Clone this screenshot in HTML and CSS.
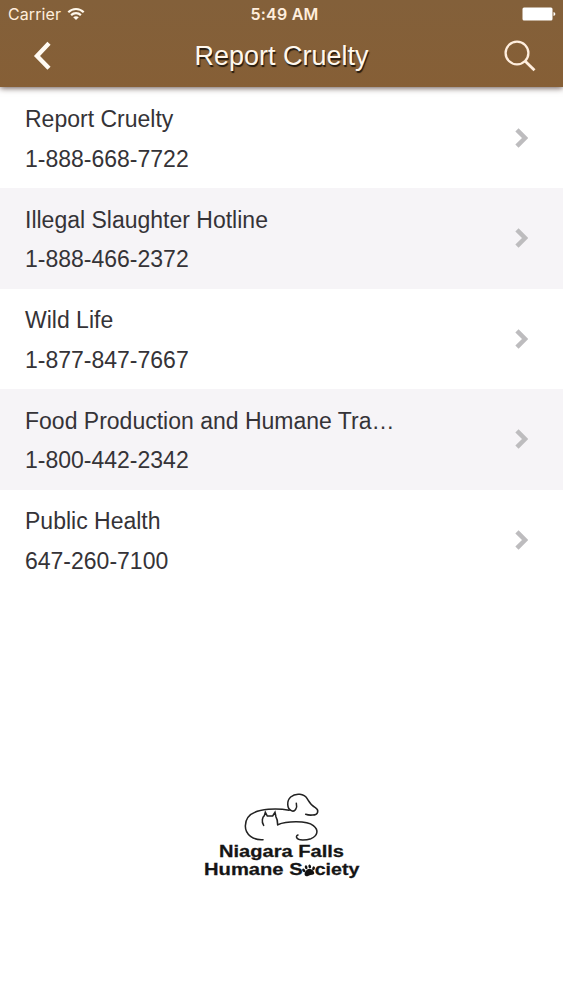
FILE: index.html
```
<!DOCTYPE html>
<html lang="en">
<head>
    <meta charset="utf-8">
    <title>Report Cruelty</title>
    <link rel="stylesheet" href="styles.css">
</head>
<body>
    <header class="header">
        <div class="status-bar">
            <div class="carrier">
                <span>Carrier</span>
                <svg class="wifi" width="18" height="14" viewBox="0 0 18 14" fill="none" stroke="#fff8ec" stroke-width="2.2">
                    <path d="M1.3 5.2C5.6 .9 12.4 .9 16.7 5.2"/>
                    <path d="M4.1 8.1C6.9 5.4 11.1 5.4 13.9 8.1"/>
                    <path d="M9 13L6.2 10.3C7.9 8.8 10.1 8.8 11.8 10.3Z" fill="#fff8ec" stroke="none"/>
                </svg>
            </div>
            <div class="time">5:49 AM</div>
            <svg class="battery" width="34" height="14" viewBox="0 0 34 14" fill="#fff">
                <rect x="0.5" y="0.5" width="30" height="13" rx="1.5"/>
                <path d="M31.5 5Q33.4 5.4 33.4 7T31.5 9Z"/>
            </svg>
        </div>
        <div class="nav-bar">
            <svg class="back" width="20" height="30" viewBox="0 0 20 30" fill="none" stroke="#fffaf2" stroke-width="4.4">
                <path d="M16 2.3L4 15L16 27.3"/>
            </svg>
            <h1>Report Cruelty</h1>
            <svg class="search" width="34" height="34" viewBox="0 0 34 34" fill="none" stroke="#ffeede" stroke-width="2.3">
                <circle cx="14" cy="14" r="11.4"/>
                <path d="M22 22L31.5 31.3" stroke-width="2.8"/>
            </svg>
        </div>
    </header>

    <ul class="list">
        <li class="item">
            <div class="info">
                <div class="name">Report Cruelty</div>
                <div class="phone">1-888-668-7722</div>
            </div>
            <svg class="arrow" viewBox="0 0 14 22"><path d="M2 2L11 11L2 20"/></svg>
        </li>
        <li class="item">
            <div class="info">
                <div class="name">Illegal Slaughter Hotline</div>
                <div class="phone">1-888-466-2372</div>
            </div>
            <svg class="arrow" viewBox="0 0 14 22"><path d="M2 2L11 11L2 20"/></svg>
        </li>
        <li class="item">
            <div class="info">
                <div class="name">Wild Life</div>
                <div class="phone">1-877-847-7667</div>
            </div>
            <svg class="arrow" viewBox="0 0 14 22"><path d="M2 2L11 11L2 20"/></svg>
        </li>
        <li class="item">
            <div class="info">
                <div class="name">Food Production and Humane Tra…</div>
                <div class="phone">1-800-442-2342</div>
            </div>
            <svg class="arrow" viewBox="0 0 14 22"><path d="M2 2L11 11L2 20"/></svg>
        </li>
        <li class="item">
            <div class="info">
                <div class="name">Public Health</div>
                <div class="phone">647-260-7100</div>
            </div>
            <svg class="arrow" viewBox="0 0 14 22"><path d="M2 2L11 11L2 20"/></svg>
        </li>
    </ul>

    <footer class="footer">
        <svg class="logo" width="180" height="110" viewBox="0 0 540 330">
            <g fill="none" stroke="#222" stroke-width="4.6" stroke-linecap="round">
                <!-- dog -->
                <path d="M219 179C190 181 166 164 166 138C166 105 195 91 235 88C262 86 282 88 297 91"/>
                <path d="M319 70C323 85 314 97 304 92C291 86 289 63 302 51C318 37 343 42 351 55C360 70 362 76 376 83C388 90 385 105 368 105C360 106 353 105 347 103"/>
                <!-- cat -->
                <path d="M221 136C213 124 218 111 223 107L226 97L232 108H248L255 97L258 111C262 117 263 124 263 134"/>
                <path d="M263 134C290 123 350 121 370 137C388 151 382 168 363 176C348 181 325 183 320 173C318 168 321 166 324 165"/>
            </g>
            <g class="logo-text">
                <text x="87" y="230" textLength="375" lengthAdjust="spacingAndGlyphs">Niagara Falls</text>
                <text x="42" y="286" textLength="296" lengthAdjust="spacingAndGlyphs">Humane S</text>
                <text x="374" y="286" textLength="134" lengthAdjust="spacingAndGlyphs">ciety</text>
            </g>
            <!-- paw -->
            <g fill="#111" transform="rotate(-12 357 273)">
                <path d="M357 267C365 267 373 276 371 283C369 289 362 285 357 286C351 287 344 289 342 283C341 276 349 267 357 267Z"/>
                <ellipse cx="342" cy="268" rx="4" ry="6" transform="rotate(-30 342 268)"/>
                <ellipse cx="351" cy="260" rx="4" ry="6"/>
                <ellipse cx="362" cy="260" rx="4" ry="6"/>
                <ellipse cx="372" cy="268" rx="4" ry="6" transform="rotate(30 372 268)"/>
            </g>
        </svg>
    </footer>
</body>
</html>
```
FILE: styles.css
```
* {
    box-sizing: border-box;
}

body {
    margin: 0;
    height: 1000px;
    background: #fff;
    font-family: "Liberation Sans", Arial, sans-serif;
    color: #353337;
    overflow: hidden;
}

.header {
    position: relative;
    height: 87px;
    background: linear-gradient(#83603a, #865f36);
    box-shadow: 0 1px 6px rgba(50, 25, 20, 0.75);
}

.status-bar {
    display: grid;
    grid-template-columns: 1fr auto 1fr;
    align-items: center;
    height: 28px;
    padding: 0 7px 0 8px;
    font-family: Inter, sans-serif;
    font-size: 16px;
    color: #ffeedd;
}

.carrier {
    display: flex;
    align-items: center;
    gap: 6px;
    letter-spacing: 0.1px;
}

.time {
    font-weight: 600;
    letter-spacing: 0.2px;
    padding-left: 5px;
}

.battery {
    justify-self: end;
}

.nav-bar {
    display: grid;
    grid-template-columns: 40px 1fr 40px;
    align-items: center;
    height: 56px;
    padding: 0 20px 0 33px;
}

h1 {
    margin: 0;
    padding-right: 13px;
    text-align: center;
    font-size: 27px;
    font-weight: normal;
    color: #fff8ee;
    text-shadow: 1px 2px 1px rgba(0, 0, 0, 0.75);
}

.list {
    list-style: none;
    margin: 0;
    padding: 0.5px 0 0;
}

.item {
    display: flex;
    align-items: center;
    justify-content: space-between;
    height: 100.5px;
    padding: 0 35px 0 25px;
}

.item:nth-child(even) {
    background: #f6f4f7;
}

.info {
    font-size: 23px;
    line-height: 39.5px;
    padding-top: 4px;
}

.arrow {
    width: 13px;
    height: 20px;
    fill: none;
    stroke: #bdbcbe;
    stroke-width: 5;
}

.footer {
    padding: 190px 0 0 190px;
}

.logo {
    display: block;
}

.logo-text {
    font-size: 52px;
    font-weight: bold;
    fill: #151515;
    stroke: #151515;
    stroke-width: 0.8px;
}
```
